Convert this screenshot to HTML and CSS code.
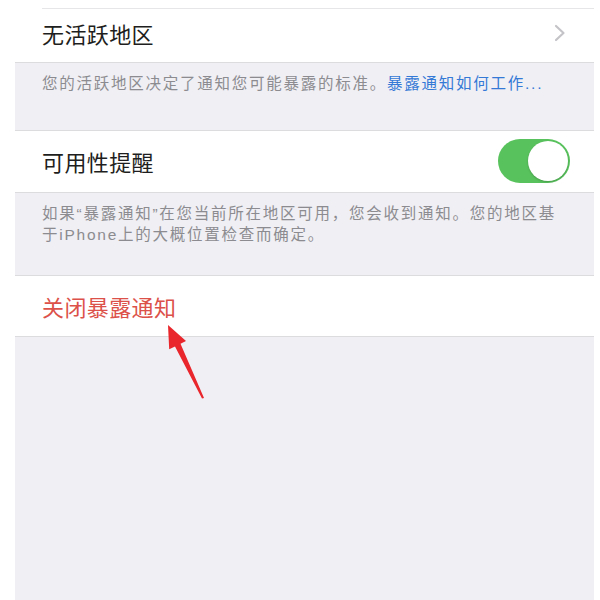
FILE: index.html
```html
<!DOCTYPE html>
<html lang="zh-CN">
<head>
<meta charset="utf-8">
<link rel="stylesheet" href="styles.css">
</head>
<body>
<div class="screen">
  <div class="group first-group">
    <div class="stub"></div>
    <div class="cell cell-first">
      <span class="label">无活跃地区</span>
      <svg class="chevron" width="12" height="18" viewBox="0 0 12 18"><path d="M2 2 L9.5 9 L2 16" fill="none" stroke="#c4c4c8" stroke-width="2.2" stroke-linecap="round" stroke-linejoin="round"/></svg>
    </div>
  </div>
  <div class="footer footer-one">您的活跃地区决定了通知您可能暴露的标准。<span class="link">暴露通知如何工作...</span></div>

  <div class="group">
    <div class="cell cell-toggle">
      <span class="label">可用性提醒</span>
      <div class="toggle"><div class="knob"></div></div>
    </div>
  </div>
  <div class="footer footer-two">如果“暴露通知”在您当前所在地区可用，您会收到通知。您的地区基于iPhone上的大概位置检查而确定。</div>

  <div class="group">
    <div class="cell cell-red">
      <span class="label danger">关闭暴露通知</span>
    </div>
  </div>

  <svg class="arrow" width="600" height="600" viewBox="0 0 600 600">
    <polygon points="168,325 186,341 180.5,343.8 204,398 202,398.6 175,346.4 169.2,349.2" fill="#e8262c"/>
  </svg>
</div>
</body>
</html>
```

FILE: styles.css
```css
html, body {
  margin: 0;
  padding: 0;
  background: #ffffff;
}

body {
  font-family: "Liberation Sans", "Noto Sans CJK SC", sans-serif;
}

.screen {
  margin-left: 15px;
  width: 579px;
  height: 600px;
  background: #f0eff4;
  display: flex;
  flex-direction: column;
}

.group {
  background: #ffffff;
  border-top: 1px solid #dcdcdf;
  border-bottom: 1px solid #dcdcdf;
}

.first-group {
  border-top: none;
}

.stub {
  height: 8px;
  margin-left: 27px;
  border-bottom: 1px solid #e6e6e8;
}

.cell {
  height: 53px;
  padding: 0 28px 0 27px;
  display: flex;
  align-items: center;
  justify-content: space-between;
  box-sizing: border-box;
}

.cell-first {
  padding-bottom: 6px;
}

.cell-toggle {
  height: 61px;
  padding-right: 24px;
  padding-bottom: 2px;
}

.cell-red {
  height: 60px;
}

.label {
  font-size: 22px;
  letter-spacing: 0.4px;
  color: #1e1e20;
}

.danger {
  color: #dc5149;
}

.chevron {
  display: block;
}

.footer {
  padding: 10px 27px 0 27px;
  font-size: 15.5px;
  line-height: 21px;
  letter-spacing: 1.75px;
  color: #8c8c90;
  box-sizing: border-box;
}

.footer-one {
  height: 67px;
}

.footer-two {
  height: 82px;
}

.link {
  color: #3479d6;
}

.toggle {
  width: 72px;
  height: 44px;
  border-radius: 22px;
  background: #58c25c;
  display: flex;
  align-items: center;
  justify-content: flex-end;
  padding: 2px;
  box-sizing: border-box;
}

.knob {
  width: 40px;
  height: 40px;
  border-radius: 50%;
  background: #ffffff;
  box-shadow: 0 1px 2px rgba(0, 0, 0, 0.2);
}

.arrow {
  position: absolute;
  left: 0;
  top: 0;
  pointer-events: none;
}
```
